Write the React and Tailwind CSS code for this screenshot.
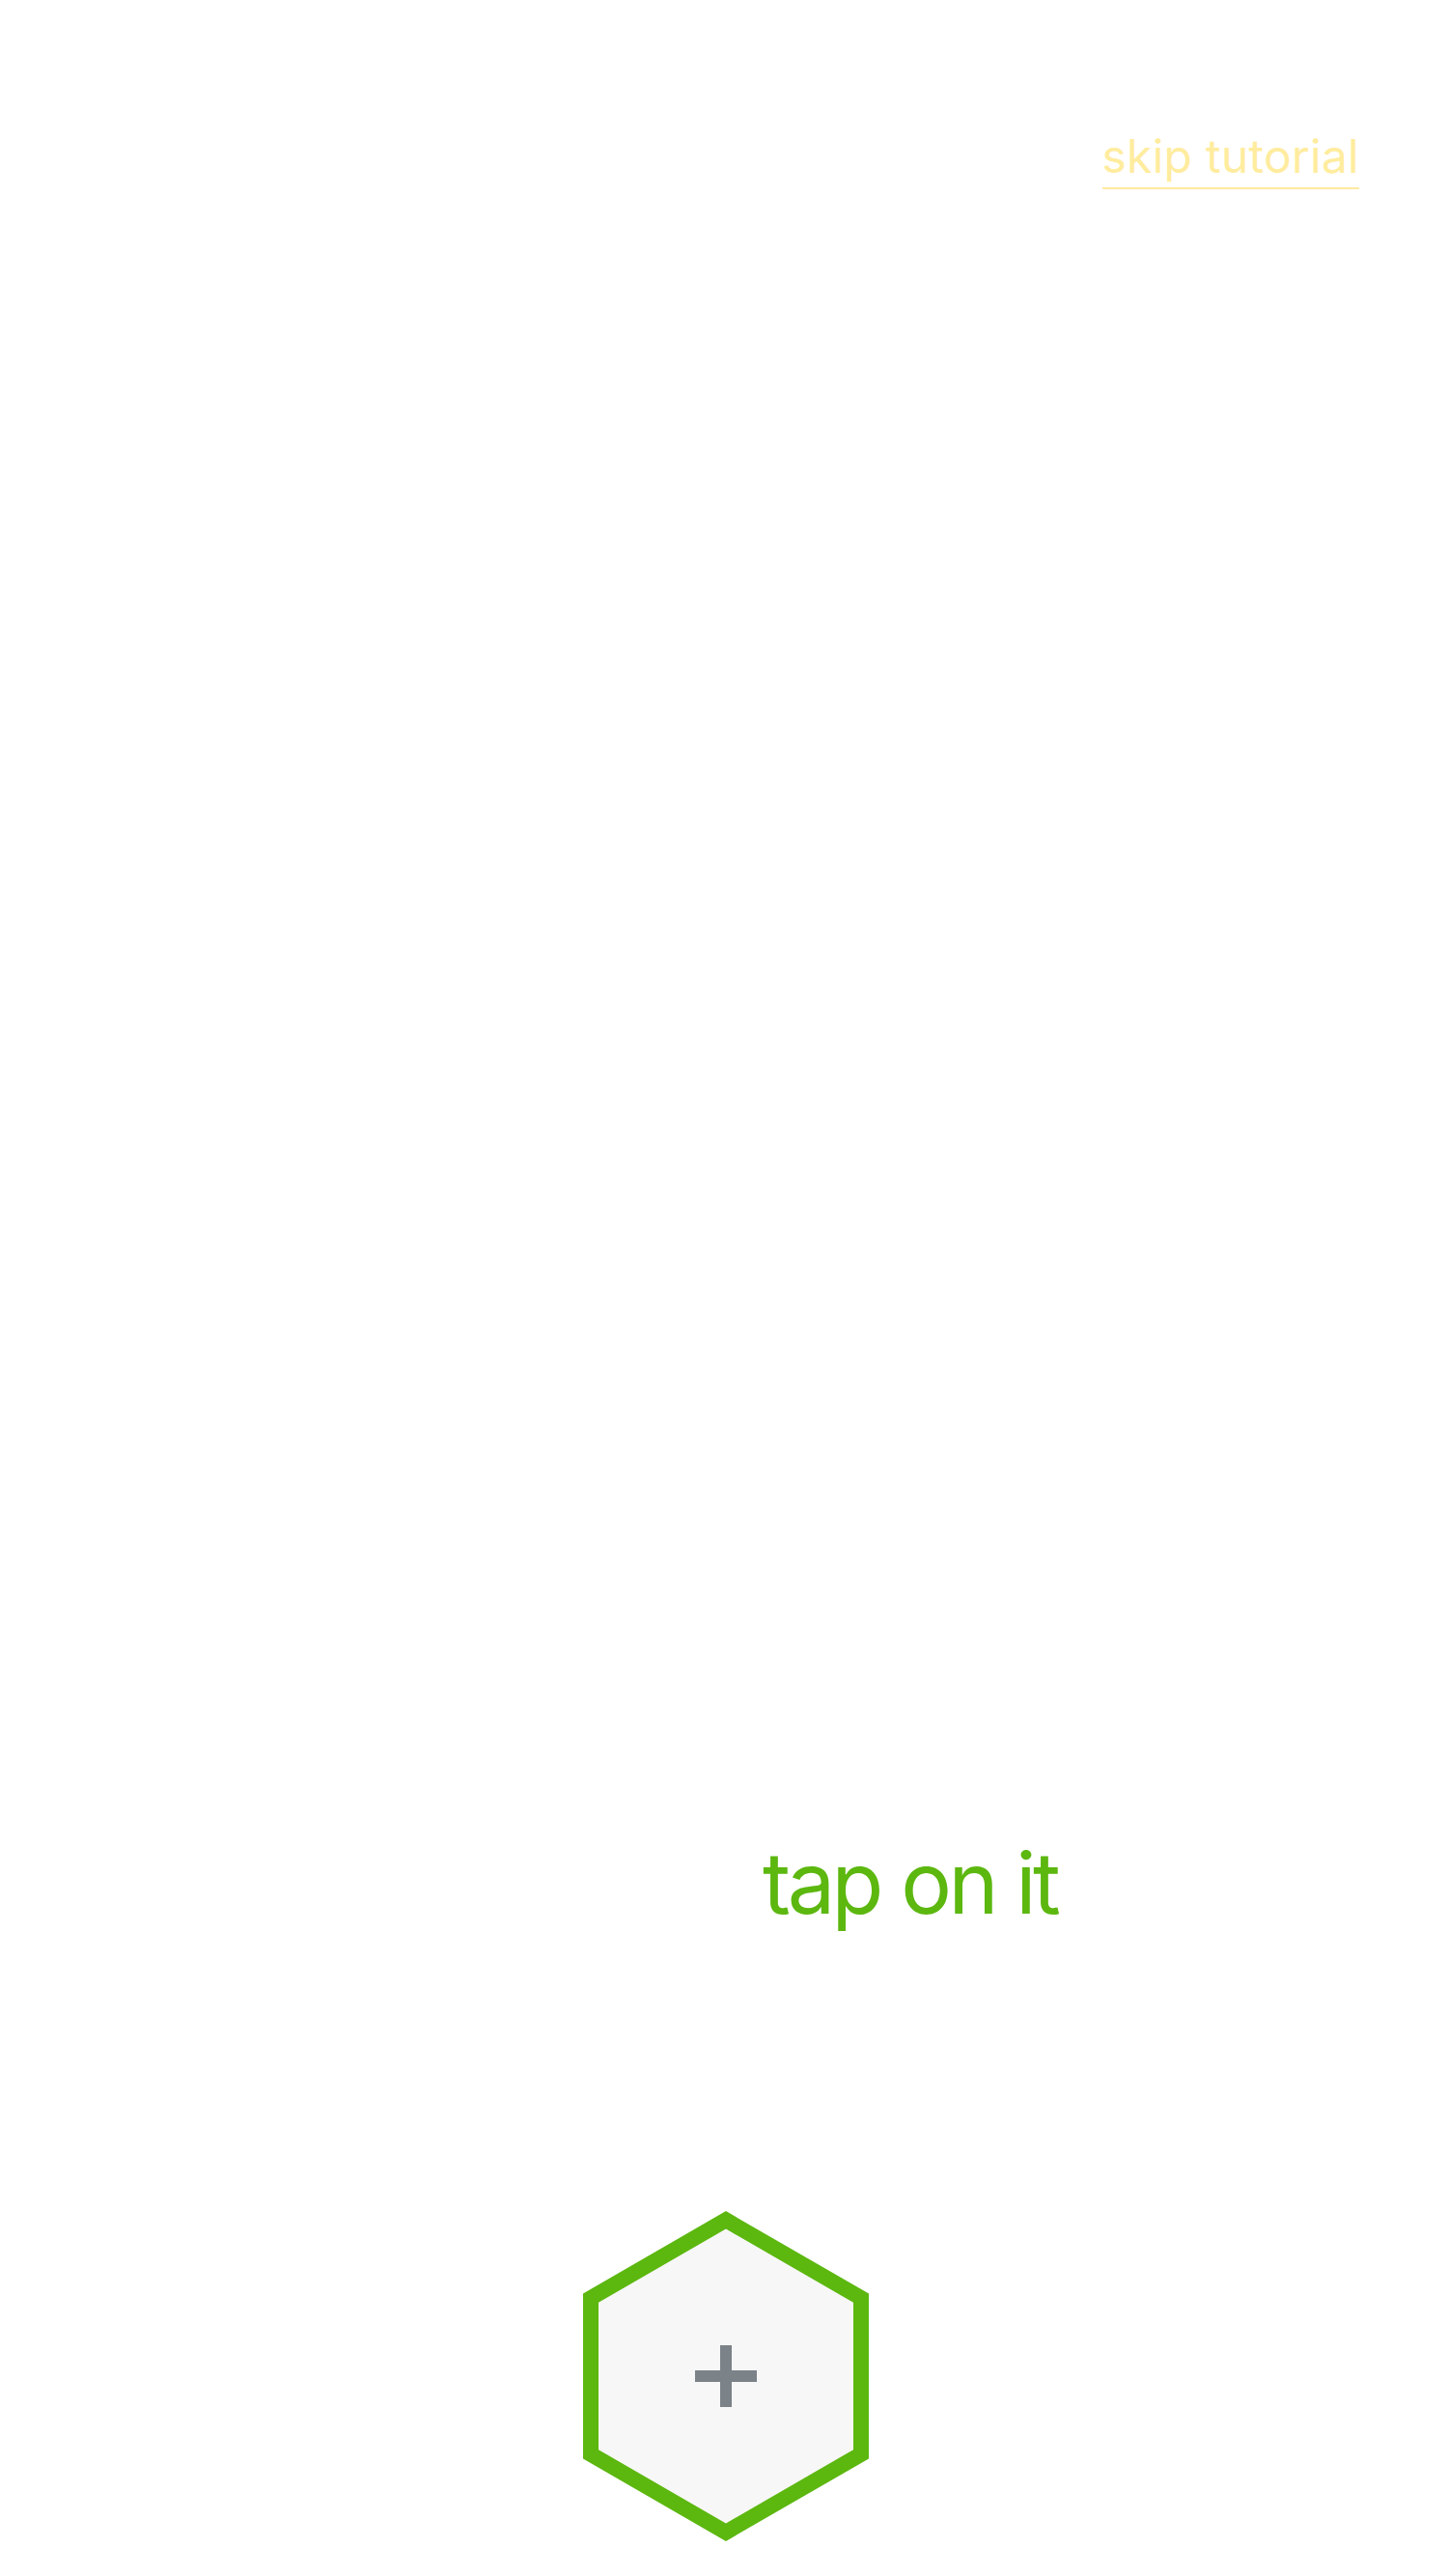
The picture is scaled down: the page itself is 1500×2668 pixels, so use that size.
import React from "react";

// six corners of a pointy-top hexagon centred in a w x h box, inset by d
function hexPoints(w, h, d) {
  const cx = w / 2;
  const cy = h / 2;
  const r = (w / 2 - d) * (2 / Math.sqrt(3));
  const pts = [];
  for (let i = 0; i < 6; i++) {
    const a = (Math.PI / 3) * i - Math.PI / 2;
    pts.push(`${(cx + r * Math.cos(a)).toFixed(1)},${(cy + r * Math.sin(a)).toFixed(1)}`);
  }
  return pts.join(" ");
}

function HexButton() {
  const w = 296;
  const h = 342;
  return (
    <button type="button" className="relative block" aria-label="add">
      <svg width={w} height={h} viewBox={`0 0 ${w} ${h}`}>
        <polygon points={hexPoints(w, h, 0)} fill="#5cb70f" />
        <polygon points={hexPoints(w, h, 16)} fill="#f7f7f7" />
        <rect x={116} y={165} width={64} height={12} fill="#7b8288" />
        <rect x={142} y={139} width={12} height={64} fill="#7b8288" />
      </svg>
    </button>
  );
}

export default function App() {
  return (
    <div
      className="min-h-[2668px] bg-white flex flex-col"
      style={{ fontFamily: "Inter, 'Noto Sans', sans-serif" }}
    >
      <div className="flex justify-end pt-[138px] pr-[92px]">
        <a href="#" className="text-[48px] leading-none tracking-[0.005em] text-[#ffec9e] border-b-[2px] border-[#ffe9a0] pb-2">
          skip tutorial
        </a>
      </div>

      <p className="mt-[1710px] pl-[790px] text-[88px] leading-none tracking-[-0.04em] text-[#5cb70f] whitespace-nowrap">
        tap on it
      </p>

      <div className="mt-[296px] flex justify-center pl-[4px]">
        <HexButton />
      </div>
    </div>
  );
}
